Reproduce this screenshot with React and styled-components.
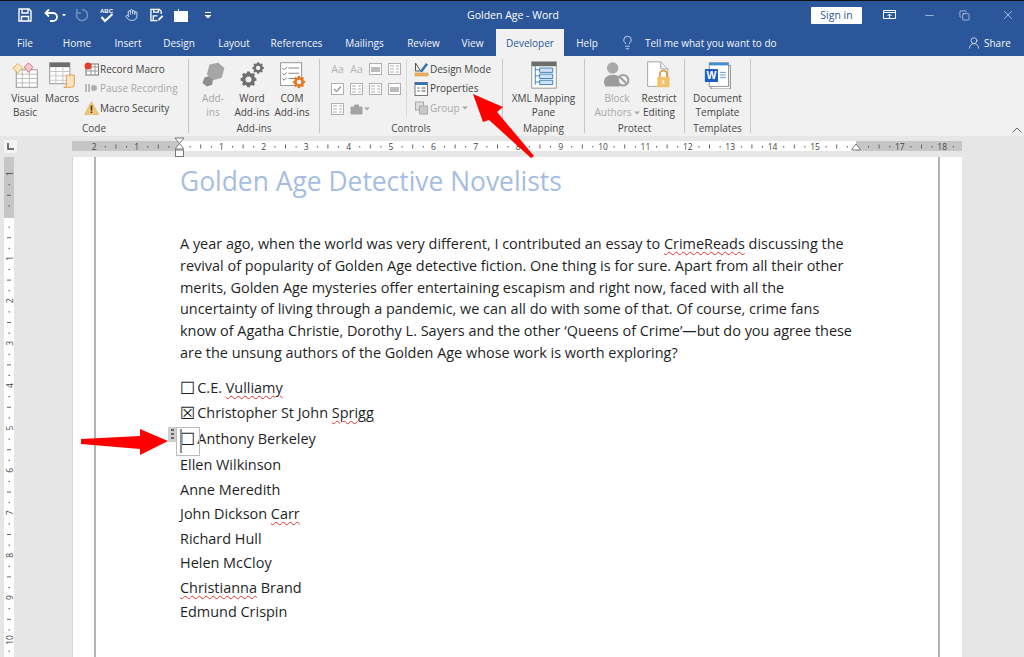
import React from "react";
import styled, { createGlobalStyle } from "styled-components";
import { Hand, Lightbulb, UserRound, X, Minus, Copy } from "lucide-react";

const UI_FONT = `"Open Sans", "Noto Sans", sans-serif`;

const GlobalStyle = createGlobalStyle`
  html, body {
    margin: 0;
    padding: 0;
    width: 1024px;
    height: 657px;
    overflow: hidden;
    background: #e6e6e6;
    font-family: ${UI_FONT};
  }
  * { box-sizing: border-box; }
`;

const Window = styled.div`
  position: relative;
  width: 1024px;
  height: 657px;
  overflow: hidden;
  display: flex;
  flex-direction: column;
  background: #e6e6e6;
`;

const TitleBar = styled.div`
  height: 29px;
  flex: none;
  border-top: 1px solid #111;
  background: #2b579a;
  display: flex;
  align-items: center;
  color: #fff;
  padding: 0 0 0 18px;
`;

const QuickAccess = styled.div`
  width: 310px;
  flex: none;
  display: flex;
  align-items: center;
`;

const Slot = styled.div`
  width: ${(p) => p.$w}px;
  margin-left: ${(p) => p.$ml || 0}px;
  flex: none;
  display: flex;
  align-items: center;
  justify-content: center;
`;

const DocTitle = styled.div`
  width: 370px;
  flex: none;
  text-align: center;
  font-size: 10.5px;
  color: #fff;
`;

const SignIn = styled.div`
  width: 51px;
  height: 17px;
  margin-left: 113px;
  flex: none;
  background: #fff;
  color: #2b579a;
  font-size: 10.5px;
  line-height: 17px;
  text-align: center;
  border-radius: 1px;
`;

const WindowButtons = styled.div`
  display: flex;
  align-items: center;
  margin-left: 21px;
`;

const TabBar = styled.div`
  height: 27px;
  flex: none;
  background: #2b579a;
  display: flex;
  align-items: center;
  color: #f3f6fb;
  font-size: 10px;
  position: relative;
`;

const Tab = styled.div`
  width: ${(p) => p.$w}px;
  height: 27px;
  line-height: 29px;
  text-align: center;
  flex: none;
  ${(p) =>
    p.$active &&
    `background: #f1f1f1;
     color: #2b579a;`}
`;

const TellMe = styled.div`
  margin-left: 10px;
  display: flex;
  align-items: center;
  gap: 10px;
  width: 347px;
  flex: none;
`;

const Share = styled.div`
  display: flex;
  align-items: center;
  gap: 3px;
`;

const Ribbon = styled.div`
  position: relative;
  height: 80px;
  flex: none;
  background: #f1f1f1;
  display: flex;
  padding: 3px 0 3px 0;
  color: #444;
  font-size: 10px;
`;

const Group = styled.div`
  width: ${(p) => p.$w}px;
  flex: none;
  display: flex;
  flex-direction: column;
  border-right: 1px solid #c6c6c6;
`;

const GroupBody = styled.div`
  height: 61px;
  flex: none;
  display: flex;
  justify-content: ${(p) => p.$justify || "flex-start"};
  padding-left: ${(p) => p.$pad || 0}px;
`;

const GroupLabel = styled.div`
  height: 13px;
  line-height: 16px;
  text-align: center;
  font-size: 10px;
  color: #4a4a4a;
`;

const BigButton = styled.div`
  width: ${(p) => p.$w}px;
  flex: none;
  display: flex;
  flex-direction: column;
  align-items: center;
  text-align: center;
  line-height: 14px;
  white-space: nowrap;
  color: ${(p) => (p.$disabled ? "#a8a8a8" : "#444")};
  > svg {
    width: 28px;
    height: 28px;
    margin: 2px 0 2px;
    flex: none;
  }
`;

const SmallStack = styled.div`
  display: flex;
  flex-direction: column;
  margin-left: ${(p) => p.$ml || 0}px;
`;

const SmallButton = styled.div`
  height: 19.5px;
  display: flex;
  align-items: center;
  white-space: nowrap;
  color: ${(p) => (p.$disabled ? "#a8a8a8" : "#444")};
`;

const ControlGrid = styled.div`
  display: grid;
  grid-template-columns: repeat(4, 19px);
  grid-auto-rows: 20px;
  align-items: center;
  justify-items: center;
  width: 79px;
  height: 58px;
  margin-right: 7px;
  border-right: 1px solid #d8d8d8;
  color: #b4b4b4;
  font-size: 10.5px;
`;

const ShiftedCaret = styled.span`
  justify-self: start;
  margin-left: -4px;
  line-height: 0;
`;

const CollapseChevron = styled.svg`
  position: absolute;
  right: 2px;
  bottom: 3px;
`;

const RulerRow = styled.div`
  height: 21px;
  flex: none;
  display: flex;
  align-items: center;
  background: #e6e6e6;
`;

const TabStop = styled.div`
  width: 13px;
  height: 13px;
  margin-left: 4px;
  margin-right: 55px;
  background: #f4f4f4;
  display: flex;
  align-items: center;
  justify-content: center;
`;

const Workspace = styled.div`
  flex: 1;
  min-height: 0;
  display: flex;
`;

const SideRuler = styled.div`
  width: 73px;
  flex: none;
  padding-left: 4px;
  svg { display: block; }
`;

const Page = styled.div`
  width: 889px;
  flex: none;
  background: #fff;
  box-shadow: -1px 0 0 #d4d4d4;
  padding: 0 22px 0 21px;
`;

const PageBody = styled.div`
  height: 100%;
  border-left: 2px solid #b4b4b4;
  border-right: 2px solid #b4b4b4;
  padding: 9px 0 0 84px;
  font-family: "Open Sans", "Noto Sans", sans-serif;
  color: #1f1f1f;
  font-size: 14.44px;
`;

const Heading = styled.h1`
  margin: 0 0 37px;
  font-weight: 400;
  font-size: 26.4px;
  line-height: 30px;
  color: #a6bde3;
  white-space: nowrap;
`;

const Paragraph = styled.div`
  line-height: 21.8px;
  margin-bottom: 11px;
`;

const Line = styled.div`
  white-space: nowrap;
`;

const ListRow = styled.div`
  height: ${(p) => p.$h}px;
  line-height: ${(p) => p.$h}px;
  white-space: nowrap;
  position: relative;
`;

const Misspelled = styled.span`
  text-decoration: underline wavy #e2342c 1px;
  text-underline-offset: 2px;
`;

const CheckGlyph = styled.span`
  font-family: "DejaVu Sans", sans-serif;
  font-size: 17px;
  line-height: 1;
  margin-right: 2px;
  vertical-align: -1px;
`;

const ControlFrame = styled.div`
  position: absolute;
  left: -4px;
  top: 1px;
  width: 24px;
  height: 29px;
  border: 1px solid #bcbcbc;
  pointer-events: none;
  &::before {
    content: "";
    position: absolute;
    left: 3px;
    top: 1px;
    bottom: 2px;
    width: 2px;
    background: #8f8f8f;
  }
`;

const ControlHandle = styled.div`
  position: absolute;
  left: -12px;
  top: 1px;
  width: 8px;
  height: 15px;
  background: #cfcfcf;
  display: flex;
  flex-direction: column;
  align-items: center;
  justify-content: center;
  gap: 2px;
  i {
    display: block;
    width: 3px;
    height: 2px;
    background: #666;
  }
`;

const Overlay = styled.svg`
  position: absolute;
  left: 0;
  top: 0;
  pointer-events: none;
`;

const CaretWrap = styled.span`
  display: inline-block;
  margin-left: 2px;
  vertical-align: 1px;
  line-height: 0;
`;

const white = { fill: "none", stroke: "#fff", strokeWidth: 1.4 };

function QuickIcons() {
  return (
    <>
      <Slot $w={14}>
        <svg width="14" height="14" viewBox="0 0 14 14" {...white}>
          <path d="M1 1h10l2 2v10H1z" />
          <path d="M4 1v4h6V1M3.500 13V8.500h7V13" />
        </svg>
      </Slot>
      <Slot $w={22} $ml={12}>
        <svg width="22" height="14" viewBox="0 0 22 14" fill="none" stroke="#fff" strokeWidth="1.800">
          <path d="M2 5h7a4 4 0 0 1 0 8H6M5 1.500 1.500 5 5 8.500" />
          <path d="M18 6h4l-2 2.500z" fill="#fff" stroke="none" />
        </svg>
      </Slot>
      <Slot $w={14} $ml={8}>
        <svg width="14" height="14" viewBox="0 0 14 14" fill="none" stroke="#6f8fc0" strokeWidth="1.600">
          <path d="M8 1.500a5.500 5.500 0 1 1-5 3.200M3 1v4h4" />
        </svg>
      </Slot>
      <Slot $w={14} $ml={12}>
        <svg width="14" height="16" viewBox="0 0 14 16" {...white}>
          <path d="M1.500 10 5 14l7.500-7" strokeWidth="2" />
          <text x="0" y="5.500" fontSize="6" fill="#fff" stroke="none" fontFamily="Liberation Sans" fontWeight="700">ABC</text>
        </svg>
      </Slot>
      <Slot $w={13} $ml={11}>
        <Hand size={16} color="#fff" strokeWidth={1.400} />
      </Slot>
      <Slot $w={14} $ml={12}>
        <svg width="15" height="14" viewBox="0 0 15 14" {...white}>
          <path d="M8 13H1V1h9l2 2v3M4 1v3h5V1M3.500 13V8H8" />
          <path d="M9 12.500 13.500 8" strokeWidth="2" />
        </svg>
      </Slot>
      <Slot $w={14} $ml={10}>
        <svg width="14" height="13" viewBox="0 0 14 13">
          <path d="M0 2h4V0h1v2h9v11H0z" fill="#fff" />
        </svg>
      </Slot>
      <Slot $w={8} $ml={16}>
        <svg width="8" height="8" viewBox="0 0 8 8">
          <path d="M1 1h6v1H1zM0.500 4h7L4 7.500z" fill="#fff" />
        </svg>
      </Slot>
    </>
  );
}

const VisualBasicIcon = () => (
  <svg viewBox="0 0 32 32">
    <rect x="6" y="10" width="24" height="20" fill="#fff" stroke="#8a8a8a" />
    <path d="M6 15h24M6 20h24M6 25h24M13 10v20M21 10v20" stroke="#b5b5b5" />
    <path d="M8 3l5 5-5 6-6-6z" fill="#f8e6c0" stroke="#e0a64a" />
    <path d="M20 2l5 5-5 6-5-6z" fill="#f6c6cb" stroke="#d9697a" />
  </svg>
);

const MacrosIcon = () => (
  <svg viewBox="0 0 32 32">
    <rect x="2" y="2" width="23" height="24" fill="#fff" stroke="#8a8a8a" />
    <rect x="2" y="2" width="23" height="5" fill="#6d6d6d" />
    <path d="M2 12h23M2 17h23M2 22h23M9 7v19M17 7v19" stroke="#c0c0c0" />
    <path d="M21 16h9v11a3 3 0 0 1-3 3h-9a2 2 0 0 0 3-2z" fill="#fbe3c3" stroke="#e4913c" />
  </svg>
);

const AddinsIcon = () => (
  <svg viewBox="0 0 32 32">
    <path d="M12 4l10-2 7 6-3 11-10 3-7-7z" fill="#a6a6a6" />
    <path d="M6 19l5-2 5 4-1 6-6 2-5-4z" fill="#8e8e8e" />
  </svg>
);

const Gear = ({ x, y, r, color }) => (
  <g transform={`translate(${x} ${y})`}>
    <circle r={r * 0.62} fill="none" stroke={color} strokeWidth={r * 0.42} />
    <g stroke={color} strokeWidth={r * 0.38}>
      {[0, 45, 90, 135].map((a) => (
        <path key={a} d={`M${-r} 0H${r}`} transform={`rotate(${a})`} />
      ))}
    </g>
    <circle r={r * 0.38} fill="#f1f1f1" />
  </g>
);

const WordAddinsIcon = () => (
  <svg viewBox="0 0 32 32">
    <Gear x={12} y={21} r={9} color="#6f6f6f" />
    <Gear x={23} y={8} r={6.500} color="#6f6f6f" />
  </svg>
);

const ComAddinsIcon = () => (
  <svg viewBox="0 0 32 32">
    <rect x="3" y="2" width="24" height="26" fill="#fff" stroke="#8a8a8a" />
    <path d="M12 8h12M12 14h12M12 20h8" stroke="#777" />
    <path d="M5 8l2 2 3-3M5 14l2 2 3-3M5 20l2 2 3-3" fill="none" stroke="#666" />
    <Gear x={24} y={24} r={7} color="#e07b28" />
  </svg>
);

const XmlPaneIcon = () => (
  <svg viewBox="0 0 32 32">
    <rect x="2" y="1" width="28" height="30" fill="#fff" stroke="#8a8a8a" />
    <rect x="2" y="1" width="28" height="5" fill="#6d6d6d" />
    <path d="M6 6v21M6 10h5M6 17h5M6 24h5" stroke="#2e75b6" fill="none" />
    <path d="M11 8h15v5H11zM11 15h15v5H11zM11 22h15v5H11z" fill="#cfe2f3" stroke="#2e75b6" />
  </svg>
);

const BlockAuthorsIcon = () => (
  <svg viewBox="0 0 32 32">
    <circle cx="11" cy="8" r="6.500" fill="#a9a9a9" />
    <path d="M1 25c0-6 4-9 10-9s9 2 10 6l-2 7H3z" fill="#9c9c9c" />
    <circle cx="23" cy="22" r="6" fill="#f1f1f1" stroke="#a0a0a0" strokeWidth="2.400" />
    <path d="M19 18l8 8" stroke="#a0a0a0" strokeWidth="2.400" />
  </svg>
);

const RestrictIcon = () => (
  <svg viewBox="0 0 32 32">
    <path d="M3 1h15l8 8v20H3z" fill="#fff" stroke="#9a9a9a" />
    <path d="M18 1v8h8" fill="#f1f1f1" stroke="#9a9a9a" />
    <rect x="14" y="18" width="14" height="12" rx="1" fill="#f2c36b" />
    <path d="M17 18v-3a4 4 0 0 1 8 0v3" fill="none" stroke="#d59f3c" strokeWidth="2" />
    <rect x="20" y="22" width="2" height="4" fill="#fff" />
  </svg>
);

const TemplateIcon = () => (
  <svg viewBox="0 0 32 32">
    <rect x="8" y="5" width="22" height="27" fill="#fff" stroke="#777" />
    <rect x="6" y="2" width="22" height="27" fill="#fff" stroke="#8a8a8a" />
    <rect x="6" y="2" width="22" height="3" fill="#3a8fd8" />
    <rect x="1" y="9" width="15" height="15" rx="1" fill="#1d5fc0" />
    <text x="8.500" y="21" fontSize="12" fontWeight="700" fill="#fff" textAnchor="middle" fontFamily="Liberation Sans">W</text>
    <path d="M18 13h7M18 16h7M18 19h7" stroke="#4a90d9" />
  </svg>
);

const RecordIcon = () => (
  <svg width="16" height="14" viewBox="0 0 16 14">
    <rect x="2" y="2" width="12.500" height="11" fill="#fff" stroke="#777" />
    <path d="M2 5h12.500M2 9h12.500M7 2v11M11 2v11" stroke="#999" />
    <circle cx="4" cy="4" r="3.500" fill="#e0402c" />
  </svg>
);

const PauseIcon = () => (
  <svg width="16" height="10" viewBox="0 0 16 10">
    <path d="M2 1v8M5 1v8" stroke="#b0b0b0" strokeWidth="1.600" />
    <circle cx="10" cy="5" r="3" fill="#b0b0b0" />
  </svg>
);

const WarningIcon = () => (
  <svg width="16" height="14" viewBox="0 0 16 14">
    <path d="M7.500 0.500 14.500 13.500H0.500z" fill="#f3c675" stroke="#dba648" strokeWidth=".5" />
    <path d="M6.700 4.500h1.600v5H6.700zM6.700 10.500h1.600v1.600H6.700z" fill="#333" />
  </svg>
);

const DesignModeIcon = () => (
  <svg width="16" height="16" viewBox="0 0 16 16">
    <path d="M1.500 2l5 8h-5z" fill="none" stroke="#555" />
    <path d="M6 10l6-8 2 1.500-6 8z" fill="#2e75b6" />
    <rect x="1" y="12" width="13" height="3" fill="#efb062" stroke="#d58a32" strokeWidth=".5" />
  </svg>
);

const PropertiesIcon = () => (
  <svg width="16" height="15" viewBox="0 0 16 15">
    <rect x="1" y="1.500" width="12.500" height="13" fill="#fff" stroke="#777" />
    <rect x="1" y="1.500" width="12.500" height="2.500" fill="#2e75b6" />
    <path d="M3.500 7h2M3.500 10h2M7.500 7h4M7.500 10h4" stroke="#555" />
  </svg>
);

const GroupIcon = () => (
  <svg width="16" height="16" viewBox="0 0 16 16">
    <rect x="1.500" y="2" width="8" height="8" fill="#ddd" stroke="#aaa" />
    <rect x="5.500" y="6" width="8" height="8" fill="#c9c9c9" stroke="#aaa" />
  </svg>
);

const DocGlyph = ({ kind }) => (
  <svg width="15" height="14" viewBox="0 0 15 14" fill="none" stroke="#b0b0b0">
    {kind !== "tools" && <rect x="1.500" y="1.500" width="12" height="11" fill="#fff" />}
    {kind === "check" && <path d="M4 7l2.500 2.500L11 4.500" stroke="#9a9a9a" strokeWidth="1.400" />}
    {kind === "image" && <rect x="3" y="5" width="9" height="5" fill="#bcbcbc" stroke="none" />}
    {kind === "lines" && <path d="M3 4h4M3 7h4M3 10h4M9 4h3M9 7h3M9 10h3" />}
    {kind === "tools" && <path d="M2 5h11v7H2zM5.500 5V3h4v2" fill="#a4a4a4" stroke="#a4a4a4" />}
  </svg>
);

const Caret = () => (
  <CaretWrap>
    <svg width="6" height="4" viewBox="0 0 6 4">
      <path d="M0 0.500h6L3 3.500z" fill="#a8a8a8" />
    </svg>
  </CaretWrap>
);

// horizontal ruler, numbers every 42.4px from the margin at x = 179
function TopRuler() {
  const origin = 107;
  const unit = 42.4;
  const marks = [];
  for (let n = -2; n <= 18; n++) {
    const x = origin + n * unit;
    // 0 and 16 sit under the indent markers
    if (n !== 0 && n !== 16) {
      marks.push(
        <text key={`n${n}`} x={x} y="8.500" fontSize="8.500" fill="#444" textAnchor="middle" fontFamily="Open Sans">
          {Math.abs(n)}
        </text>
      );
    }
    [0.25, 0.75].forEach((f) =>
      marks.push(<rect key={`d${n}${f}`} x={x + f * unit} y="5" width="1" height="1.500" fill="#555" />)
    );
    marks.push(<rect key={`h${n}`} x={x + 0.5 * unit} y="3.500" width="1" height="4" fill="#666" />);
  }
  return (
    <svg width="890" height="21" viewBox="0 0 890 21">
      <g transform="translate(0 5)">
        <rect width="890" height="10" fill="#c6c6c6" />
        <rect x="107" width="677" height="10" fill="#fff" />
        <svg width="890" height="10" overflow="hidden">{marks}</svg>
      </g>
      <path d="M103 2h9l-4.500 5.500zM103 13h9l-4.500-5.500z" fill="#fff" stroke="#777" />
      <rect x="103.500" y="14" width="8" height="6.500" fill="#fff" stroke="#777" />
      <path d="M784 8l4 5v1h-8v-1z" fill="#fff" stroke="#777" />
    </svg>
  );
}

function LeftRuler() {
  const origin = 59;
  const unit = 42.4;
  const marks = [];
  for (let n = -1; n <= 10; n++) {
    const y = origin + n * unit;
    if (n !== 0) {
      marks.push(
        <text key={`n${n}`} transform={`translate(8.500 ${y}) rotate(-90)`} fontSize="8.500" fill="#444" textAnchor="middle" fontFamily="Open Sans">
          {Math.abs(n)}
        </text>
      );
    }
    [0.25, 0.75].forEach((f) =>
      marks.push(<rect key={`d${n}${f}`} x="4.500" y={y + f * unit} width="1.500" height="1" fill="#555" />)
    );
    marks.push(<rect key={`h${n}`} x="3" y={y + 0.5 * unit} width="4" height="1" fill="#666" />);
  }
  return (
    <svg width="10" height="500" viewBox="0 0 10 500">
      <rect width="10" height="500" fill="#fff" />
      <rect width="10" height="61" fill="#c6c6c6" />
      {marks}
    </svg>
  );
}

function RibbonBar() {
  return (
    <Ribbon>
      <Group $w={189}>
        <GroupBody $pad={8}>
          <BigButton $w={34}><VisualBasicIcon />Visual<br />Basic</BigButton>
          <BigButton $w={40}><MacrosIcon />Macros</BigButton>
          <SmallStack $ml={2}>
            <SmallButton><RecordIcon />Record Macro</SmallButton>
            <SmallButton $disabled><PauseIcon />Pause Recording</SmallButton>
            <SmallButton><WarningIcon />Macro Security</SmallButton>
          </SmallStack>
        </GroupBody>
        <GroupLabel>Code</GroupLabel>
      </Group>
      <Group $w={131}>
        <GroupBody $pad={5}>
          <BigButton $w={38} $disabled><AddinsIcon />Add-<br />ins</BigButton>
          <BigButton $w={40}><WordAddinsIcon />Word<br />Add-ins</BigButton>
          <BigButton $w={40}><ComAddinsIcon />COM<br />Add-ins</BigButton>
        </GroupBody>
        <GroupLabel>Add-ins</GroupLabel>
      </Group>
      <Group $w={183}>
        <GroupBody $pad={8}>
          <ControlGrid>
            <span>Aa</span>
            <span>Aa</span>
            <DocGlyph kind="image" />
            <DocGlyph kind="lines" />
            <DocGlyph kind="check" />
            <DocGlyph kind="lines" />
            <DocGlyph kind="lines" />
            <DocGlyph kind="image" />
            <DocGlyph kind="lines" />
            <DocGlyph kind="tools" />
            <ShiftedCaret><Caret /></ShiftedCaret>
          </ControlGrid>
          <SmallStack>
            <SmallButton><DesignModeIcon />Design Mode</SmallButton>
            <SmallButton><PropertiesIcon />Properties</SmallButton>
            <SmallButton $disabled><GroupIcon />Group<Caret /></SmallButton>
          </SmallStack>
        </GroupBody>
        <GroupLabel>Controls</GroupLabel>
      </Group>
      <Group $w={82}>
        <GroupBody $justify="center">
          <BigButton $w={70}><XmlPaneIcon />XML Mapping<br />Pane</BigButton>
        </GroupBody>
        <GroupLabel>Mapping</GroupLabel>
      </Group>
      <Group $w={100}>
        <GroupBody $pad={9}>
          <BigButton $w={46} $disabled><BlockAuthorsIcon /><span>Block<br />Authors<Caret /></span></BigButton>
          <BigButton $w={38}><RestrictIcon />Restrict<br />Editing</BigButton>
        </GroupBody>
        <GroupLabel>Protect</GroupLabel>
      </Group>
      <Group $w={66}>
        <GroupBody $justify="center">
          <BigButton $w={58}><TemplateIcon />Document<br />Template</BigButton>
        </GroupBody>
        <GroupLabel>Templates</GroupLabel>
      </Group>
      <CollapseChevron width="10" height="6" viewBox="0 0 10 6" fill="none" stroke="#666">
        <path d="M0.500 5.500 5 1l4.500 4.500" />
      </CollapseChevron>
    </Ribbon>
  );
}

const names = [
  ["Ellen Wilkinson", 25.500],
  ["Anne Meredith", 25],
  [<>John Dickson <Misspelled>Carr</Misspelled></>, 24.500],
  ["Richard Hull", 24.500],
  ["Helen McCloy", 24.500],
  [<><Misspelled>Christianna</Misspelled> Brand</>, 24.500],
];

export default function App() {
  return (
    <Window>
      <GlobalStyle />
      <TitleBar>
        <QuickAccess><QuickIcons /></QuickAccess>
        <DocTitle>Golden Age  -  Word</DocTitle>
        <SignIn>Sign in</SignIn>
        <WindowButtons>
          <Slot $w={13}>
            <svg width="13" height="10" viewBox="0 0 13 10" fill="none" stroke="#fff">
              <path d="M0.500 0.500h12v8h-12zM0.500 2.500h12M6.500 8V4M4.500 6l2-2 2 2" />
            </svg>
          </Slot>
          <Slot $w={13} $ml={27}><Minus size={13} color="#fff" strokeWidth={1} /></Slot>
          <Slot $w={11} $ml={23}><Copy size={11} color="#fff" strokeWidth={1.200} /></Slot>
          <Slot $w={14} $ml={31}><X size={14} color="#fff" strokeWidth={1} /></Slot>
        </WindowButtons>
      </TitleBar>
      <TabBar>
        <Tab $w={50}>File</Tab>
        <Tab $w={54}>Home</Tab>
        <Tab $w={48}>Insert</Tab>
        <Tab $w={54}>Design</Tab>
        <Tab $w={56}>Layout</Tab>
        <Tab $w={69}>References</Tab>
        <Tab $w={67}>Mailings</Tab>
        <Tab $w={51}>Review</Tab>
        <Tab $w={47}>View</Tab>
        <Tab $w={68} $active>Developer</Tab>
        <Tab $w={46}>Help</Tab>
        <TellMe>
          <Lightbulb size={15} strokeWidth={1.200} />
          Tell me what you want to do
        </TellMe>
        <Share><UserRound size={14} strokeWidth={1.200} />Share</Share>
      </TabBar>
      <RibbonBar />
      <RulerRow>
        <TabStop>
          <svg width="7" height="7" viewBox="0 0 7 7"><path d="M1 0v6h6" fill="none" stroke="#444" strokeWidth="1.500" /></svg>
        </TabStop>
        <TopRuler />
      </RulerRow>
      <Workspace>
        <SideRuler><LeftRuler /></SideRuler>
        <Page>
          <PageBody>
            <Heading>Golden Age Detective Novelists</Heading>
            <Paragraph>
              <Line>A year ago, when the world was very different, I contributed an essay to <Misspelled>CrimeReads</Misspelled> discussing the</Line>
              <Line>revival of popularity of Golden Age detective fiction. One thing is for sure. Apart from all their other</Line>
              <Line>merits, Golden Age mysteries offer entertaining escapism and right now, faced with all the</Line>
              <Line>uncertainty of living through a pandemic, we can all do with some of that. Of course, crime fans</Line>
              <Line>know of Agatha Christie, Dorothy L. Sayers and the other ‘Queens of Crime’—but do you agree these</Line>
              <Line>are the unsung authors of the Golden Age whose work is worth exploring?</Line>
            </Paragraph>
            <ListRow $h={25.500}><CheckGlyph>☐</CheckGlyph>C.E. <Misspelled>Vulliamy</Misspelled></ListRow>
            <ListRow $h={25.500}><CheckGlyph>☒</CheckGlyph>Christopher St John <Misspelled>Sprigg</Misspelled></ListRow>
            <ListRow $h={26}>
              <ControlHandle><i /><i /><i /></ControlHandle>
              <ControlFrame />
              <CheckGlyph>☐</CheckGlyph>Anthony Berkeley
            </ListRow>
            {names.map(([name, h], i) => (
              <ListRow key={i} $h={h}>{name}</ListRow>
            ))}
            <ListRow $h={24}>Edmund Crispin</ListRow>
          </PageBody>
        </Page>
      </Workspace>
      <Overlay width="1024" height="657" viewBox="0 0 1024 657">
        <path d="M473 94 503 107 497 112 534 156 531 158 489 120 483 122z" fill="#fe0000" />
        <path d="M81 439 140 436 140 429 168 441 140 455 140 449 81 444z" fill="#fe0000" />
      </Overlay>
    </Window>
  );
}
